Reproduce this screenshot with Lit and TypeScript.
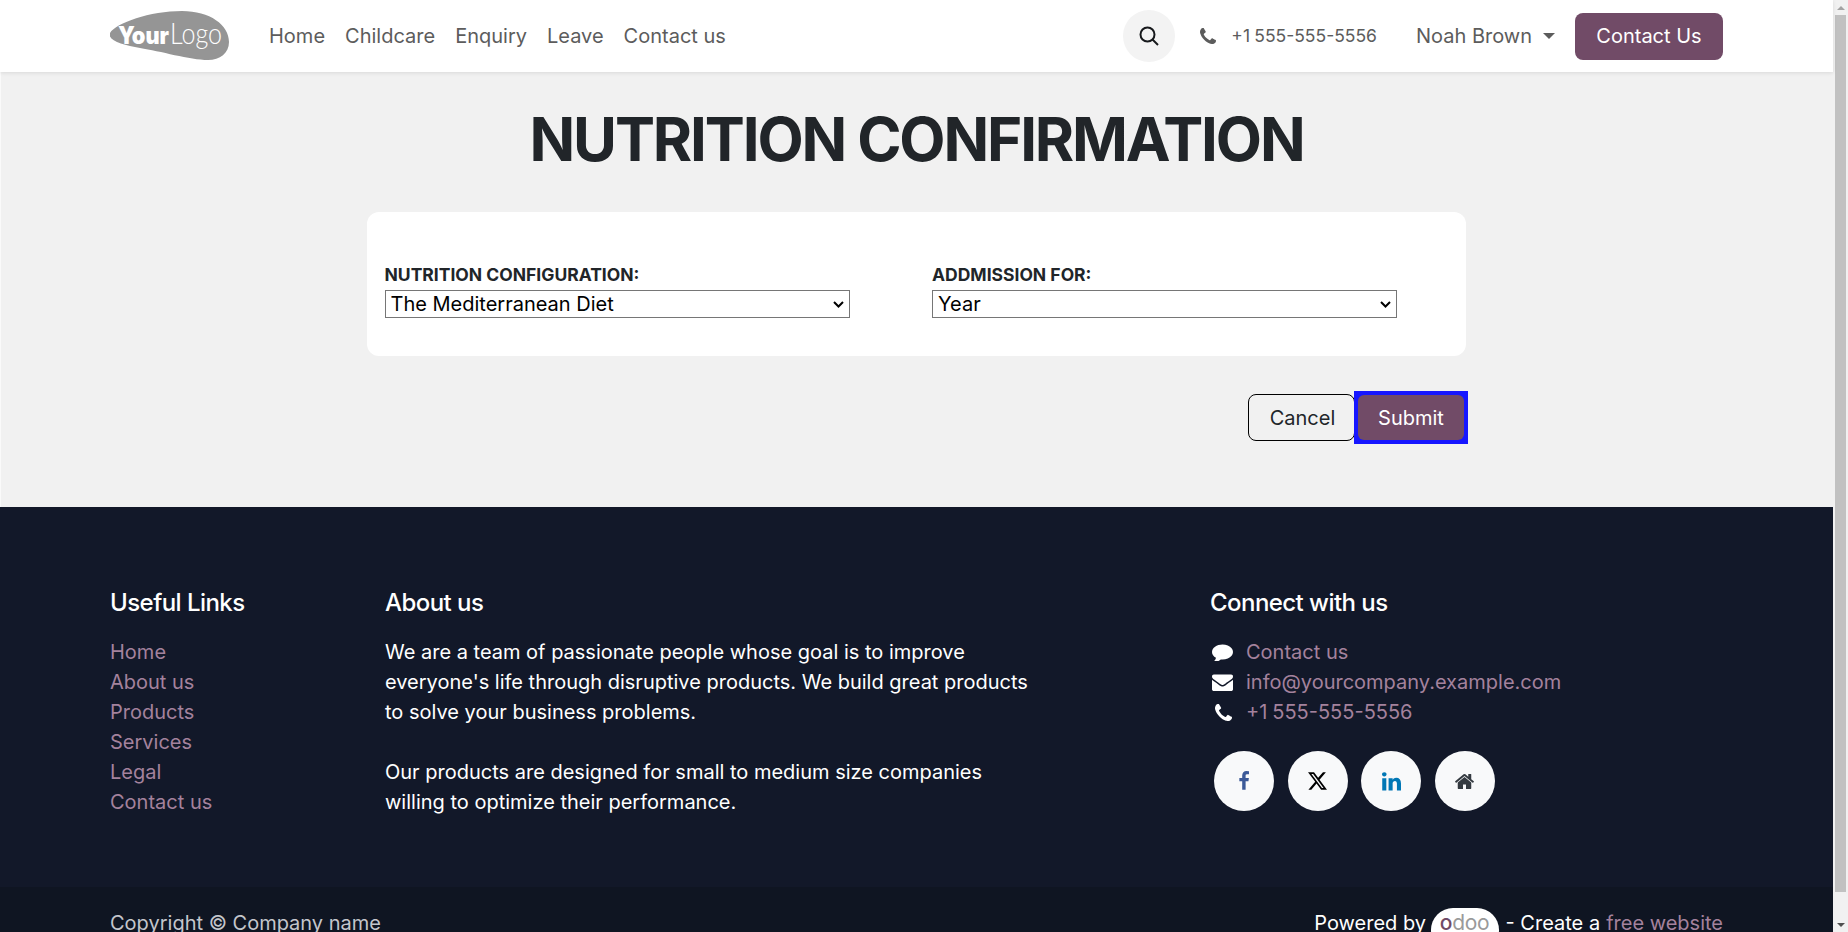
import { LitElement, html, css } from "lit";
import { customElement } from "lit/decorators.js";

const PHONE = "M1600 1240q0 27-10 70.5t-21 68.5q-21 50-122 106-94 51-186 51-27 0-53-3.500t-57.500-12.500-47-14.500-55.500-20.500-49-18q-98-35-175-83-127-79-264-216t-216-264q-48-77-83-175-3-9-18-49t-20.500-55.500-14.500-47-12.500-57.500-3.500-53q0-92 51-186 56-101 106-122 25-11 68.500-21t70.500-10q14 0 21 3 18 6 53 76 11 19 30 54t35 63.500 31 53.500q3 4 17.500 25t21.500 35.500 7 28.500q0 20-28.500 50t-62 55-62 53-28.500 46q0 9 5 22.500t8.500 20.500 14 24 11.500 19q76 137 174 235t235 174q2 1 19 11.500t24 14 20.500 8.500 22.500 5q18 0 46-28.500t53-62 55-62 50-28.500q14 0 28.500 7t35.500 21.500 25 17.500q25 15 53.500 31t63.500 35 54 30q70 35 76 53 3 7 3 21z";
const COMMENT = "M1792 896q0 174-120 321.500t-326 233-450 85.500q-70 0-145-8-198 175-460 242-49 14-114 22-17 2-30.500-9t-17.500-29v-1q-3-4-.5-12t2-10 4.500-9.500l6-9 7-8.500 8-9q7-8 31-34.500t34.500-38 31-39.500 32.500-51 27-59 26-76q-157-89-247.500-220t-90.500-281q0-130 71-248.500t191-204.500 286-136.500 348-50.500q244 0 450 85.500t326 233 120 321.500z";
const ENVELOPE = "M1792 710v794q0 66-47 113t-113 47h-1472q-66 0-113-47t-47-113v-794q44 49 101 87 362 246 497 345 57 42 92.500 65.500t94.500 48 110 24.500h2q51 0 110-24.500t94.500-48 92.500-65.500q170-123 498-345 57-39 100-87zm0-294q0 79-49 151t-122 123q-376 261-468 325-10 7-42.500 30.500t-54 38-52 32.500-57.500 27-50 9h-2q-23 0-50-9t-57.500-27-52-32.500-54-38-42.500-30.500q-91-64-262-182.500t-205-142.500q-62-42-117-115.500t-55-136.500q0-78 41.500-130t118.500-52h1472q65 0 112.500 47t47.500 113z";
const HOME = "M1472 992v480q0 26-19 45t-45 19h-384v-384h-256v384h-384q-26 0-45-19t-19-45v-480q0-1 .5-3t.5-3l575-474 575 474q1 2 1 6zm223-69l-62 74q-8 9-21 11h-3q-13 0-21-7l-692-577-692 577q-12 8-24 7-13-2-21-11l-62-74q-8-10-7-23.500t11-21.500l719-599q32-26 76-26t76 26l244 204v-195q0-14 9-23t23-9h192q14 0 23 9t9 23v408l219 182q10 8 11 21.500t-7 23.500z";
const FB = "M1343 12v264h-157q-86 0-116 36t-30 108v189h293l-39 296h-254v759h-306v-759h-255v-296h255v-218q0-186 104-288.500t277-102.500q147 0 228 12z";
const IN = "M477 625v991h-330v-991h330zm21-306q1 73-50.500 122t-135.500 49h-2q-82 0-132-49t-50-122q0-74 51.500-122.500t134.500-48.500 133 48.500 51 122.500zm1166 729v568h-329v-530q0-105-40.500-164.500t-126.500-59.500q-63 0-105.500 34.500t-63.500 85.500q-11 30-11 81v553h-329q2-399 2-647t-1-296l-1-48h329v144h-2q20-32 41-56t56.500-52 87-43.500 114.500-15.500q171 0 275 113.500t104 332.500z";

@customElement("app-root")
export class AppRoot extends LitElement {
  static styles = css`
    :host {
      display: flex;
      height: 932px;
      width: 1848px;
      overflow: hidden;
      font-family: Inter, "Liberation Sans", sans-serif;
      font-size: 20px;
      line-height: 30px;
      color: #212529;
    }
    .page { flex: 1; min-width: 0; display: flex; flex-direction: column; }
    .header {
      height: 72px; flex: none; background: #fff; display: flex; align-items: center;
      padding: 0 110px; box-shadow: 0 1px 4px rgba(0,0,0,.1); position: relative; z-index: 1;
    }
    .logo { width: 119px; height: 50px; display: block; margin-right: 40px; }
    .nav { display: flex; gap: 20px; flex: 1; color: #5c5c5c; }
    .search { width: 52px; height: 52px; border-radius: 50%; background: #f3f3f3; display: flex; align-items: center; justify-content: center; margin-right: 25px; }
    .tel { display: flex; align-items: center; color: #5c5c5c; font-size: 17.5px; word-spacing: -.7px; margin-right: 39px; }
    .tel svg { margin-right: 15px; display: block; }
    .user { color: #5c5c5c; display: flex; align-items: center; margin-right: 20px; }
    .caret { width: 0; height: 0; border-left: 6px solid transparent; border-right: 6px solid transparent; border-top: 6px solid #5c5c5c; margin-left: 11px; }
    .cta { background: #714b67; color: #fff; width: 148px; height: 47px; border-radius: 8px; display: flex; align-items: center; justify-content: center; }
    .main { height: 435px; flex: none; background: #f1f1f1; box-shadow: inset 1px 0 0 #fafafa; display: flex; flex-direction: column; align-items: center; }
    h1 { margin: 31px 0 0; font-size: 60px; line-height: 72px; font-weight: 700; letter-spacing: -2.14px; color: #212529; white-space: nowrap; }
    .card { margin-top: 37px; width: 1099px; height: 144px; box-sizing: border-box; background: #fff; border-radius: 12px; display: grid; grid-template-columns: 547.5px 1fr; padding: 50px 17.5px 0; }
    .field label { display: block; font-weight: 700; font-size: 17.5px; line-height: 26px; height: 28px; color: #212529; }
    .sel { position: relative; width: 465px; height: 28px; }
    .sel svg { position: absolute; right: 6px; top: 11px; pointer-events: none; }
    select { appearance: none; -webkit-appearance: none; display: block; width: 100%; height: 28px; font: 20px Inter, "Liberation Sans", sans-serif; background: #fff; color: #000; border: 1px solid #767676; border-radius: 0; padding: 0 0 0 5px; margin: 0; }
    .actions { width: 1099px; display: flex; justify-content: flex-end; align-items: center; margin-top: 35px; }
    .btn { height: 47px; box-sizing: border-box; font: 20px Inter, "Liberation Sans", sans-serif; display: flex; align-items: center; justify-content: center; border-radius: 8px; }
    .cancel { width: 107px; padding-left: 2px; border: 1px solid #000; color: #212529; }
    .focus { background: #1616ff; padding: 4px; margin: 0 -2px 0 -1px; }
    .submit { width: 106px; height: 45px; border-radius: 6px; background: #714b67; color: #fff; }
    .footer { flex: 1; min-height: 0; background: #121829; color: #fff; display: flex; flex-direction: column; }
    .cols { height: 380px; flex: none; box-sizing: border-box; padding: 81px 110px 0; display: grid; grid-template-columns: 275px 825px 1fr; }
    h5 { margin: 0 0 19px; font-size: 24px; line-height: 30px; font-weight: 500; letter-spacing: -0.55px; }
    .links { display: flex; flex-direction: column; color: #a4829d; }
    p { margin: 0; width: 655px; }
    .contact { display: grid; grid-template-columns: 36px 1fr; color: #a4829d; align-items: center; }
    .contact > svg { display: block; margin-left: 2px; }
    .phwrap { display: flex; padding-left: 4.5px; }
    .contact .ph { word-spacing: -.7px; }
    .social { display: flex; gap: 13.5px; margin: 24px 0 0 4.2px; }
    .social div { width: 60px; height: 60px; border-radius: 50%; background: #f8f9fa; display: flex; align-items: center; justify-content: center; }
    .bottom { flex: 1; background: #0f1522; padding: 21px 110px 0; display: flex; justify-content: space-between; }
    .copy { color: #c4c6cc; }
    .powered { display: flex; align-items: flex-start; }
    .pill { width: 68px; height: 44px; border-radius: 22px; background: #fff; margin: 0 7px 0 4.5px; text-align: center; font-size: 21px; font-weight: 400; color: #9a9a9a; letter-spacing: -.3px; line-height: 29px; }
    .pill b { font-weight: 500; color: #714b67; }
    .free { color: #a4829d; margin-left: 6px; }
    .scroll { flex: none; width: 15px; background: #f1f1f1; display: flex; flex-direction: column; align-items: center; }
    .btnup, .btndn { flex: none; width: 100%; height: 15px; display: flex; align-items: center; justify-content: center; }
    .thumb { flex: 1; width: 11px; background: #c1c1c1; }
    .track { flex: none; height: 25px; }
    .up { width: 0; height: 0; border: 4px solid transparent; border-top: 0; border-bottom: 4px solid #a3a3a3; }
    .down { width: 0; height: 0; border: 4px solid transparent; border-bottom: 0; border-top: 4px solid #505050; }
  `;

  private phone(color: string, size: number) {
    return html`<svg width=${size} height=${size} viewBox="192 128 1408 1408"><path d=${PHONE} fill=${color}></path></svg>`;
  }

  private chevron() {
    return html`<svg width="11" height="7" viewBox="0 0 11 7" fill="none" stroke="#000" stroke-width="2"><path d="M1 1L5.500 5.500L10 1"></path></svg>`;
  }

  render() {
    return html`
      <div class="page">
        <div class="header">
          <svg class="logo" viewBox="0 0 119 50">
            <path d="M0 22C6 12 40 0 72 0C100 0 119 14 119 31C119 42 110 49 98 49C80 49 50 40 30 37C14 34 -3 30 0 22Z" fill="#959595"></path>
            <text x="8" y="33" font-family="Inter" font-size="24" font-weight="900" fill="#fff" textLength="51" lengthAdjust="spacingAndGlyphs">Your</text>
            <text x="60" y="33" font-family="Lato" font-size="29" font-weight="300" fill="#fff" textLength="52" lengthAdjust="spacingAndGlyphs">Logo</text>
          </svg>
          <div class="nav"><span>Home</span><span>Childcare</span><span>Enquiry</span><span>Leave</span><span>Contact us</span></div>
          <div class="search">
            <svg width="20" height="20" viewBox="0 0 20 20" fill="none" stroke="#17191c" stroke-width="2"><circle cx="8.500" cy="8.500" r="7"></circle><path d="M13.500 13.500L19 19"></path></svg>
          </div>
          <div class="tel">${this.phone("#5c5c5c", 16)}<span>+1 555-555-5556</span></div>
          <div class="user"><span>Noah Brown</span><span class="caret"></span></div>
          <div class="cta">Contact Us</div>
        </div>
        <div class="main">
          <h1>NUTRITION CONFIRMATION</h1>
          <div class="card">
            <div class="field"><label>NUTRITION CONFIGURATION:</label><div class="sel"><select><option>The Mediterranean Diet</option></select>${this.chevron()}</div></div>
            <div class="field"><label>ADDMISSION FOR:</label><div class="sel"><select><option>Year</option></select>${this.chevron()}</div></div>
          </div>
          <div class="actions"><div class="btn cancel">Cancel</div><div class="focus"><div class="btn submit">Submit</div></div></div>
        </div>
        <div class="footer">
          <div class="cols">
            <div>
              <h5>Useful Links</h5>
              <div class="links"><span>Home</span><span>About us</span><span>Products</span><span>Services</span><span>Legal</span><span>Contact us</span></div>
            </div>
            <div>
              <h5>About us</h5>
              <p>We are a team of passionate people whose goal is to improve everyone's life through disruptive products. We build great products to solve your business problems.<br><br>Our products are designed for small to medium size companies willing to optimize their performance.</p>
            </div>
            <div>
              <h5>Connect with us</h5>
              <div class="contact">
                <svg width="21" height="18" viewBox="0 128 1792 1536"><path d=${COMMENT} fill="#fff"></path></svg><span>Contact us</span>
                <svg width="21" height="18" viewBox="0 128 1792 1536"><path d=${ENVELOPE} fill="#fff"></path></svg><span>info@yourcompany.example.com</span>
                <div class="phwrap">${this.phone("#fff", 17)}</div><span class="ph">+1 555-555-5556</span>
              </div>
              <div class="social">
                <div><svg width="20" height="20" viewBox="0 0 1792 1792"><path d=${FB} fill="#3b5998" transform="translate(0 10)"></path></svg></div>
                <div><svg width="19" height="18" viewBox="0 0 24 22"><path d="M18.900 0H22.600L14.600 9.300L24 22H16.600L10.800 14.300L4.200 22H.500L9.100 12.100L0 0H7.600L12.800 7L18.900 0ZM17.600 19.800H19.600L6.500 2.100H4.300Z" fill="#000"></path></svg></div>
                <div><svg width="19" height="19" viewBox="128 128 1536 1536"><path d=${IN} fill="#0077b5"></path></svg></div>
                <div><svg width="21" height="21" viewBox="0 0 1792 1792"><path d=${HOME} fill="#343a40"></path></svg></div>
              </div>
            </div>
          </div>
          <div class="bottom">
            <span class="copy">Copyright © Company name</span>
            <div class="powered"><span>Powered by</span><span class="pill"><b>o</b>doo</span><span>- Create a</span><span class="free">free website</span></div>
          </div>
        </div>
      </div>
      <div class="scroll"><span class="btnup"><span class="up"></span></span><span class="thumb"></span><span class="track"></span><span class="btndn"><span class="down"></span></span></div>
    `;
  }
}
